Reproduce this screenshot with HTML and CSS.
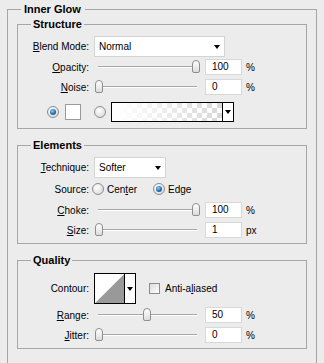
FILE: index.html
```html
<!DOCTYPE html>
<html>
<head>
    <title>Inner Glow</title>
    <link rel="stylesheet" href="styles.css">
</head>
<body>
    <fieldset class="panel">
        <legend>Inner Glow</legend>

        <fieldset class="group structure">
            <legend>Structure</legend>
            <div class="row tall">
                <label class="lbl"><u>B</u>lend Mode:</label>
                <div class="select blend"><span>Normal</span><i class="arrow"></i></div>
            </div>
            <div class="row">
                <label class="lbl"><u>O</u>pacity:</label>
                <div class="slider"><div class="track"></div><div class="thumb" style="left: 97px"></div></div>
                <div class="num">100</div><span class="unit">%</span>
            </div>
            <div class="row">
                <label class="lbl"><u>N</u>oise:</label>
                <div class="slider"><div class="track"></div><div class="thumb" style="left: 0px"></div></div>
                <div class="num">0</div><span class="unit">%</span>
            </div>
            <div class="row colors">
                <span class="radio on"></span>
                <span class="swatch"></span>
                <span class="radio second"></span>
                <div class="gradient"><div class="fill"></div><div class="drop"><i class="arrow"></i></div></div>
            </div>
        </fieldset>

        <fieldset class="group elements">
            <legend>Elements</legend>
            <div class="row tall">
                <label class="lbl"><u>T</u>echnique:</label>
                <div class="select technique"><span>Softer</span><i class="arrow"></i></div>
            </div>
            <div class="row source">
                <label class="lbl">Source:</label>
                <span class="radio"></span><span class="opt">Cen<u>t</u>er</span>
                <span class="radio on edge"></span><span class="opt">Ed<u>g</u>e</span>
            </div>
            <div class="row">
                <label class="lbl"><u>C</u>hoke:</label>
                <div class="slider"><div class="track"></div><div class="thumb" style="left: 97px"></div></div>
                <div class="num">100</div><span class="unit">%</span>
            </div>
            <div class="row">
                <label class="lbl"><u>S</u>ize:</label>
                <div class="slider"><div class="track"></div><div class="thumb" style="left: 0px"></div></div>
                <div class="num">1</div><span class="unit">px</span>
            </div>
        </fieldset>

        <fieldset class="group quality">
            <legend>Quality</legend>
            <div class="row contour-row">
                <label class="lbl">Contour:</label>
                <div class="contour">
                    <svg class="curve" width="31" height="31" viewBox="0 0 31 31">
                        <polygon points="0,31 31,0 31,31" fill="#999"/>
                    </svg>
                    <div class="drop"><i class="arrow"></i></div>
                </div>
                <span class="check"></span><span class="opt">Anti-a<u>l</u>iased</span>
            </div>
            <div class="row">
                <label class="lbl"><u>R</u>ange:</label>
                <div class="slider"><div class="track"></div><div class="thumb" style="left: 48px"></div></div>
                <div class="num">50</div><span class="unit">%</span>
            </div>
            <div class="row">
                <label class="lbl"><u>J</u>itter:</label>
                <div class="slider"><div class="track"></div><div class="thumb" style="left: 0px"></div></div>
                <div class="num">0</div><span class="unit">%</span>
            </div>
        </fieldset>
    </fieldset>
</body>
</html>
```

FILE: styles.css
```css
body {
    margin: 0; background: #ececec; color: #000;
    font: 10px "Liberation Sans", Arial, sans-serif;
}
u { text-decoration: underline; }

.panel {
    margin: 1px 0 0 7px; width: 310px; box-sizing: border-box;
    border: 1px solid #a6a6a6; padding: 0 9px 40px 9px; min-width: 0;
}
.panel > legend {
    font: bold 11px/16px "Liberation Sans", Arial, sans-serif;
    margin-left: 4px; padding: 0 4px 0 3px;
}
.group {
    margin: 0; border: 1px solid #a6a6a6; padding: 5px 0 5px 0; min-width: 0;
}
.group + .group { margin-top: 9px; }
.group legend {
    font: bold 11px/14px "Liberation Sans", Arial, sans-serif;
    margin-left: 13px; padding: 0 2px;
}
.elements, .quality { padding-bottom: 3px; }

.row { display: flex; align-items: center; height: 20px; }
.row.tall { height: 21px; }
.lbl { width: 71px; text-align: right; margin-right: 5px; flex: none; }

.select {
    position: relative; height: 21px; box-sizing: border-box;
    background: #fff; border: 1px solid #d4d4d4; padding-left: 4px;
    display: flex; align-items: center;
}
.select.blend { width: 131px; }
.select.technique { width: 72px; }
.arrow {
    display: block; width: 0; height: 0;
    border-left: 3.5px solid transparent; border-right: 3.5px solid transparent;
    border-top: 4px solid #000;
}
.select .arrow { position: absolute; right: 4px; top: 8px; }

.slider { position: relative; width: 105px; height: 14px; margin-left: 1px; }
.track {
    position: absolute; left: 3px; right: 3px; top: 6px; height: 1px;
    background: #a8a8a8; border-bottom: 1px solid #fff;
}
.thumb {
    position: absolute; top: 0; width: 8px; height: 13px; box-sizing: border-box;
    border: 1px solid #8e8e8e; border-radius: 4px 4px 2px 2px;
    background: linear-gradient(#fff, #dcdcdc);
}
.num {
    width: 37px; height: 16px; box-sizing: border-box; margin-left: 5px;
    background: #fff; border: 1px solid #d8d8d8; padding-left: 6px; line-height: 14px;
}
.unit { margin-left: 4px; }

.radio {
    position: relative; width: 12px; height: 12px; box-sizing: border-box; flex: none;
    border-radius: 50%; border: 1px solid #8c8c8c;
    background: radial-gradient(circle at 40% 35%, #fff, #d2d2d2);
}
.radio.on::after {
    content: ""; position: absolute; left: 2px; top: 2px; width: 6px; height: 6px;
    border-radius: 50%;
    background: radial-gradient(circle at 40% 35%, #8fd0f5, #1d6fb3 55%, #0b3a68);
}

.colors { height: 22px; margin-top: 4px; padding-left: 29px; }
.swatch {
    width: 16px; height: 16px; box-sizing: border-box; margin-left: 6px;
    background: #fff; border: 1px solid #9a9a9a;
}
.radio.second { margin-left: 13px; }
.gradient {
    display: flex; width: 123px; height: 20px; box-sizing: border-box; margin-left: 5px;
    border: 1px solid #000;
}
.gradient .fill {
    flex: 1;
    background:
        linear-gradient(to right, #fff 5%, rgba(255, 255, 255, 0) 95%),
        conic-gradient(#d9d9d9 25%, #fff 0 50%, #d9d9d9 0 75%, #fff 0) 0 0 / 10px 10px;
}
.drop {
    width: 10px; border-left: 1px solid #000; background: #fff;
    display: flex; align-items: center; justify-content: center;
}

.source { height: 22px; }
.source .lbl { margin-right: 3px; }
.opt { margin-left: 3px; }
.radio.edge { margin-left: 16px; }

.contour-row { height: 33px; }
.contour {
    display: flex; width: 42px; height: 31px; box-sizing: border-box;
    border: 1px solid #000; background: #fff;
}
.contour .curve { display: block; width: 30px; height: 29px; }
.check {
    width: 11px; height: 11px; box-sizing: border-box; margin-left: 13px;
    border: 1px solid #8c8c8c; background: linear-gradient(135deg, #dcdcdc, #fff);
}
.check + .opt { margin-left: 5px; }
```
